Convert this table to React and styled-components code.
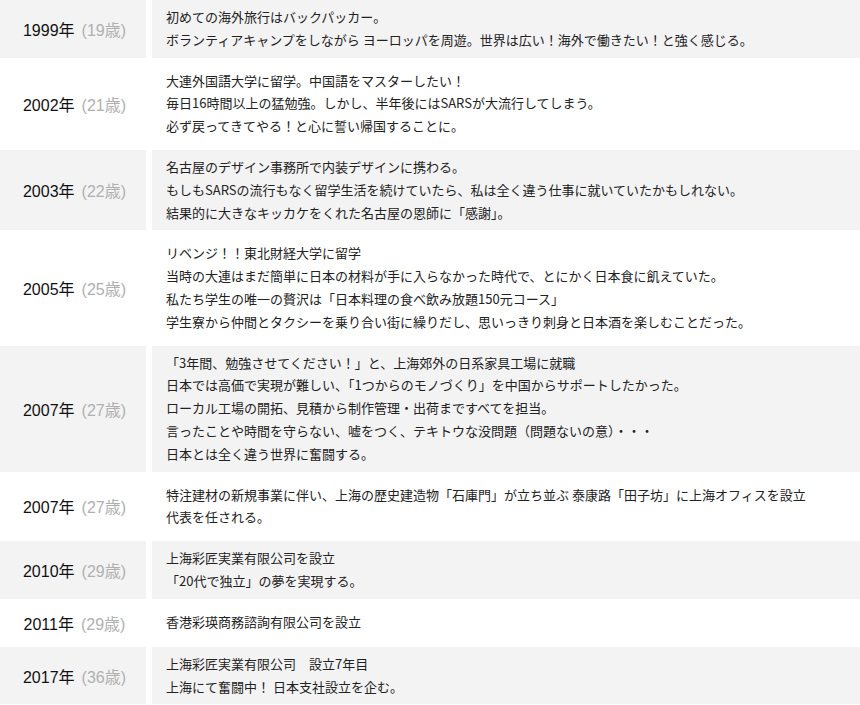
import styled, { createGlobalStyle } from "styled-components";

const GlobalStyle = createGlobalStyle`
  html, body {
    margin: 0;
    padding: 0;
    background: #fff;
  }
  body {
    font-family: "Liberation Sans", "Noto Sans CJK JP", sans-serif;
    color: #222;
  }
`;

const Table = styled.div`
  display: flex;
  flex-direction: column;
  gap: 6px;
  width: 860px;
`;

const Row = styled.div`
  display: grid;
  grid-template-columns: 146px 1fr;
  column-gap: 6px;
`;

const YearCell = styled.div`
  display: flex;
  align-items: center;
  justify-content: center;
  background: ${(p) => (p.$shaded ? "#f3f3f3" : "transparent")};
  padding: 6px 0 6px 3px;
  white-space: nowrap;
`;

const Year = styled.span`
  font-family: "Liberation Sans", "Noto Sans CJK JP", sans-serif;
  font-size: 16px;
  color: #111;
`;

const Age = styled.span`
  font-family: "Liberation Sans", "Noto Sans CJK JP", sans-serif;
  font-size: 16px;
  color: #b0b0b0;
  margin-left: 7px;
`;

const TextCell = styled.div`
  background: ${(p) => (p.$shaded ? "#f3f3f3" : "transparent")};
  padding: 6px 0 6px 14px;
  font-family: "Noto Sans CJK JP", "Liberation Sans", sans-serif;
  font-size: 13px;
  line-height: 22.8px;
  color: #222;
`;

const Line = styled.div`
  white-space: nowrap;
`;

const history = [
  {
    year: "1999",
    age: "19",
    lines: [
      "初めての海外旅行はバックパッカー。",
      "ボランティアキャンプをしながら ヨーロッパを周遊。世界は広い！海外で働きたい！と強く感じる。",
    ],
  },
  {
    year: "2002",
    age: "21",
    lines: [
      "大連外国語大学に留学。中国語をマスターしたい！",
      "毎日16時間以上の猛勉強。しかし、半年後にはSARSが大流行してしまう。",
      "必ず戻ってきてやる！と心に誓い帰国することに。",
    ],
  },
  {
    year: "2003",
    age: "22",
    lines: [
      "名古屋のデザイン事務所で内装デザインに携わる。",
      "もしもSARSの流行もなく留学生活を続けていたら、私は全く違う仕事に就いていたかもしれない。",
      "結果的に大きなキッカケをくれた名古屋の恩師に「感謝」。",
    ],
  },
  {
    year: "2005",
    age: "25",
    lines: [
      "リベンジ！！東北財経大学に留学",
      "当時の大連はまだ簡単に日本の材料が手に入らなかった時代で、とにかく日本食に飢えていた。",
      "私たち学生の唯一の贅沢は「日本料理の食べ飲み放題150元コース」",
      "学生寮から仲間とタクシーを乗り合い街に繰りだし、思いっきり刺身と日本酒を楽しむことだった。",
    ],
  },
  {
    year: "2007",
    age: "27",
    lines: [
      "「3年間、勉強させてください！」と、上海郊外の日系家具工場に就職",
      "日本では高価で実現が難しい、「1つからのモノづくり」を中国からサポートしたかった。",
      "ローカル工場の開拓、見積から制作管理・出荷まですべてを担当。",
      "言ったことや時間を守らない、嘘をつく、テキトウな没問題（問題ないの意）・・・",
      "日本とは全く違う世界に奮闘する。",
    ],
  },
  {
    year: "2007",
    age: "27",
    lines: [
      "特注建材の新規事業に伴い、上海の歴史建造物「石庫門」が立ち並ぶ 泰康路「田子坊」に上海オフィスを設立",
      "代表を任される。",
    ],
  },
  {
    year: "2010",
    age: "29",
    lines: ["上海彩匠実業有限公司を設立", "「20代で独立」の夢を実現する。"],
  },
  {
    year: "2011",
    age: "29",
    lines: ["香港彩瑛商務諮詢有限公司を設立"],
  },
  {
    year: "2017",
    age: "36",
    lines: ["上海彩匠実業有限公司　設立7年目", "上海にて奮闘中！ 日本支社設立を企む。"],
  },
];

export default function App() {
  return (
    <>
      <GlobalStyle />
      <Table>
        {history.map((item, index) => {
          const shaded = index % 2 === 0;
          return (
            <Row key={index}>
              <YearCell $shaded={shaded}>
                <Year>{item.year}年</Year>
                <Age>({item.age}歳)</Age>
              </YearCell>
              <TextCell $shaded={shaded}>
                {item.lines.map((line, i) => (
                  <Line key={i}>{line}</Line>
                ))}
              </TextCell>
            </Row>
          );
        })}
      </Table>
    </>
  );
}
